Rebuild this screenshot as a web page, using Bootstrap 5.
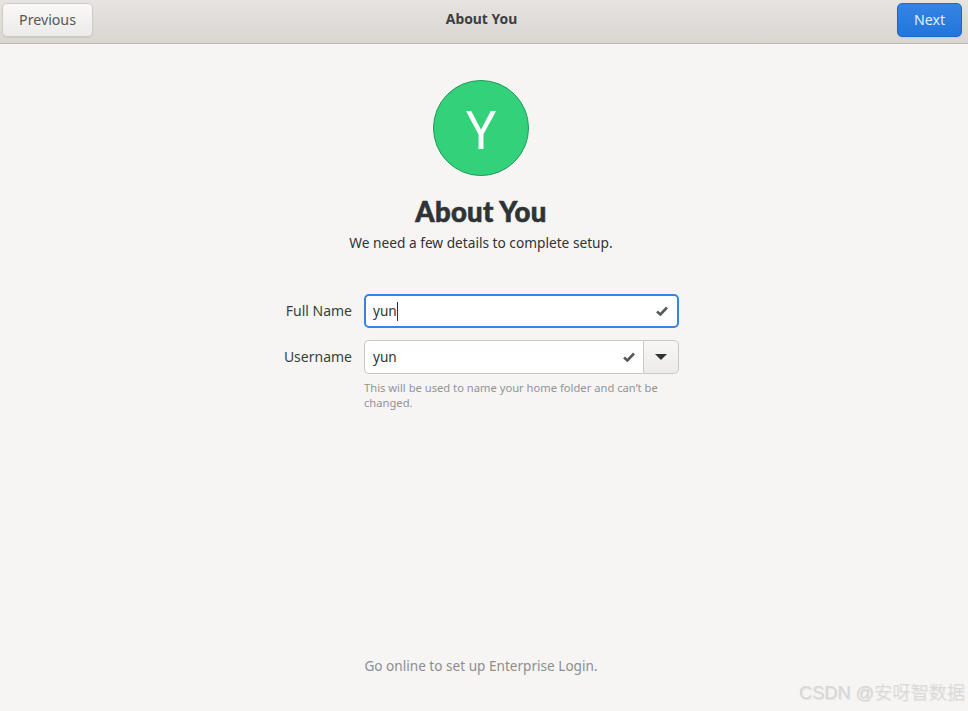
<!DOCTYPE html>
<html lang="en">
<head>
<meta charset="utf-8">
<title>About You</title>
<link href="https://cdn.jsdelivr.net/npm/bootstrap@5.3.0/dist/css/bootstrap.min.css" rel="stylesheet">
<style>
html,body{height:100%;margin:0}
body{background:#f6f5f4;color:#2e3436;font-family:"Noto Sans","Open Sans",sans-serif;font-size:13.8px;overflow:hidden}
.app-shell{height:711px;position:relative}
.head-bar{height:44px;padding:3px 6px 0 2px;background:linear-gradient(#e6e3e0,#dad6d2);border-bottom:1px solid #bfb8b1}
.head-title{font-size:13.9px;font-weight:700;color:#3a3f41;top:9px;right:5px;left:0}
.gbtn{height:34px;font-size:14.2px;line-height:1;border-radius:5px;padding:0}
.gbtn-prev{width:91px;color:#54595a;background:linear-gradient(#f9f8f7,#edebe9);border:1px solid #cfcac5;box-shadow:0 1px 1px rgba(0,0,0,.08)}
.gbtn-next{width:65px;color:#e4eefb;background:linear-gradient(#3584e4,#2275dc);border:1px solid #1b6acb;box-shadow:0 1px 1px rgba(0,0,0,.08)}
.content-col{padding-right:6px}
.avatar-disc{width:96px;height:96px;margin-top:36px;background:#33d17a;border:1px solid #1f9b57;font-size:53px;line-height:1;color:#fff}
.page-title{font-family:Lato,sans-serif;font-weight:900;font-size:27.5px;letter-spacing:.3px;line-height:34px;margin:19px 0 0;color:#2e3436;-webkit-text-stroke:.6px #2e3436}
.page-sub{font-size:13.7px;line-height:20px;margin:4px 0 0}
.form-wrap{margin:41px 0 0 283px;width:396px}
.f-label{width:69px;font-size:14px;text-align:right;color:#3a3f41;margin-right:12px;flex:none;padding-bottom:2px}
.f-row{height:34px}
.f-row+.f-row{margin-top:12px}
.f-entry{height:34px;background:#fff;border:1px solid #cdc7c2;border-radius:5px;padding:0 8px;font-size:13.6px;color:#2e3436;flex:1;min-width:0}
.f-entry.is-on{border:2px solid #3584e4;padding:0 7px}
.f-caret{display:inline-block;width:1px;height:19px;background:#2e3436}
.f-combo .f-entry{border-radius:5px 0 0 5px;border-right:0}
.f-drop{width:36px;height:34px;background:linear-gradient(#f8f7f6,#edebe9);border:1px solid #cdc7c2;border-radius:0 5px 5px 0;padding:0}
.f-hint{margin:6px 0 0 81px;font-size:11.2px;line-height:15px;color:#929496}
.foot-line{position:absolute;left:0;right:6px;top:656px;font-size:13.6px;line-height:20px;color:#8b8e90}
.wm-mark{position:absolute;right:3px;top:681px;font-size:18.2px;line-height:24px;color:#d6d6d6;font-family:"Liberation Sans","Noto Sans CJK SC",sans-serif;font-weight:300;text-shadow:1px 1px 1px rgba(0,0,0,.08)}
.tick-a{margin-right:2px}
</style>
</head>
<body>
<div class="app-shell d-flex flex-column">
  <header class="head-bar d-flex align-items-start justify-content-between position-relative">
    <button class="btn gbtn gbtn-prev" type="button">Previous</button>
    <div class="head-title position-absolute text-center pe-none">About You</div>
    <button class="btn gbtn gbtn-next" type="button">Next</button>
  </header>
  <main class="d-flex flex-column align-items-start">
    <div class="w-100 content-col d-flex flex-column align-items-center">
      <div class="avatar-disc rounded-circle d-flex align-items-center justify-content-center">Y</div>
      <h1 class="page-title">About You</h1>
      <p class="page-sub">We need a few details to complete setup.</p>
    </div>
    <form class="form-wrap">
      <div class="f-row d-flex align-items-center">
        <span class="f-label">Full Name</span>
        <div class="f-entry is-on d-flex align-items-center">
          <span>yun</span><span class="f-caret"></span>
          <svg class="ms-auto tick-a" width="12" height="10" viewBox="0 0 12 10"><path d="M1 5.5l3.4 3L11 1.5" fill="none" stroke="#555b5c" stroke-width="2.6"/></svg>
        </div>
      </div>
      <div class="f-row f-combo d-flex align-items-center">
        <span class="f-label">Username</span>
        <div class="f-entry d-flex align-items-center">
          <span>yun</span>
          <svg class="ms-auto" width="12" height="10" viewBox="0 0 12 10"><path d="M1 5.5l3.4 3L11 1.5" fill="none" stroke="#555b5c" stroke-width="2.6"/></svg>
        </div>
        <button class="f-drop d-flex align-items-center justify-content-center" type="button" aria-label="Choose username">
          <svg width="12" height="6" viewBox="0 0 12 6"><path d="M0 0h12L6 6z" fill="#2e3436"/></svg>
        </button>
      </div>
      <p class="f-hint">This will be used to name your home folder and can’t be changed.</p>
    </form>
  </main>
  <div class="foot-line text-center">Go online to set up Enterprise Login.</div>
  <div class="wm-mark">CSDN @安呀智数据</div>
</div>
<script src="https://cdn.jsdelivr.net/npm/bootstrap@5.3.0/dist/js/bootstrap.bundle.min.js"></script>
</body>
</html>
